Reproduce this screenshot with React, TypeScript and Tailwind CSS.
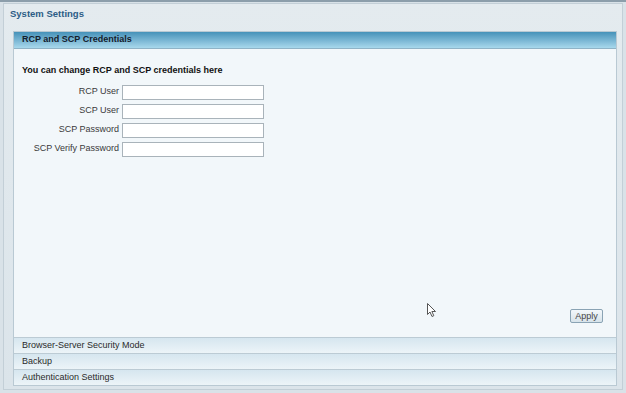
import React from "react";

const fields = ["RCP User", "SCP User", "SCP Password", "SCP Verify Password"];
const sections = ["Browser-Server Security Mode", "Backup", "Authentication Settings"];

const App = () => {
  return (
    <div
      className="relative w-[626px] h-[393px] bg-[#d9e2e8] border-t-2 border-[#8c9eab] pt-[1px] px-[3px] pb-[3px] text-[#222]"
      style={{ fontFamily: "'Liberation Sans', Arial, sans-serif" }}
    >
      <div className="h-full flex flex-col bg-gradient-to-b from-[#e4ebef] to-[#dbe4ea] border border-[#c3cfd7]">
        {/* page title */}
        <div className="h-[27px] pt-[3px] pl-[6px] leading-[13px] text-[9.5px] font-bold text-[#2c5d86]">
          System Settings
        </div>

        {/* credentials panel */}
        <div className="flex-1 flex flex-col ml-[9px] mr-[5px] mb-[3px] border border-[#b9c9d3]">
          <div className="h-[17px] flex items-center pl-[8px] text-[9px] font-bold text-[#14202c] bg-gradient-to-b from-[#4592b9] to-[#a8d8ec] border-b border-[#8fb3c7]">
            RCP and SCP Credentials
          </div>
          <div className="flex-1 flex flex-col bg-[#f2f7fa] pl-[8px] pr-[13px]">
            <div className="mt-[15px] text-[9px] font-bold text-[#111]">
              You can change RCP and SCP credentials here
            </div>
            <div className="mt-[7px] flex flex-col gap-[4px]">
              {fields.map((f) => (
                <div key={f} className="flex items-center">
                  <label className="w-[100px] text-right text-[9px] text-[#3a3a3a] pr-[3px]">{f}</label>
                  <input className="w-[142px] h-[15px] bg-white border border-[#a9b3ba] outline-none" />
                </div>
              ))}
            </div>
            <div className="flex-1" />
            <div className="flex justify-end mb-[14px]">
              <button className="w-[33px] h-[14px] rounded-[2px] border border-[#8aa3b4] bg-gradient-to-b from-[#f4f8fb] to-[#d7e3ea] text-[9px] text-[#444] leading-none">
                Apply
              </button>
            </div>
          </div>
          {sections.map((s) => (
            <div
              key={s}
              className="h-[16px] flex items-center pl-[8px] text-[9px] text-[#2a2a2a] bg-gradient-to-b from-[#d6e6ef] to-[#ecf4f8] border-t border-[#bccbd4]"
            >
              {s}
            </div>
          ))}
        </div>
      </div>

      {/* mouse pointer */}
      <svg className="absolute left-[427px] top-[301px]" width="11" height="15" viewBox="0 0 11 15">
        <path d="M0.5 0.5 L0.5 11.5 L3 9 L5 13.5 L6.8 12.7 L4.9 8.5 L8.5 8.5 Z" fill="#fff" stroke="#555" strokeWidth="1" />
      </svg>
    </div>
  );
};

export default App;
